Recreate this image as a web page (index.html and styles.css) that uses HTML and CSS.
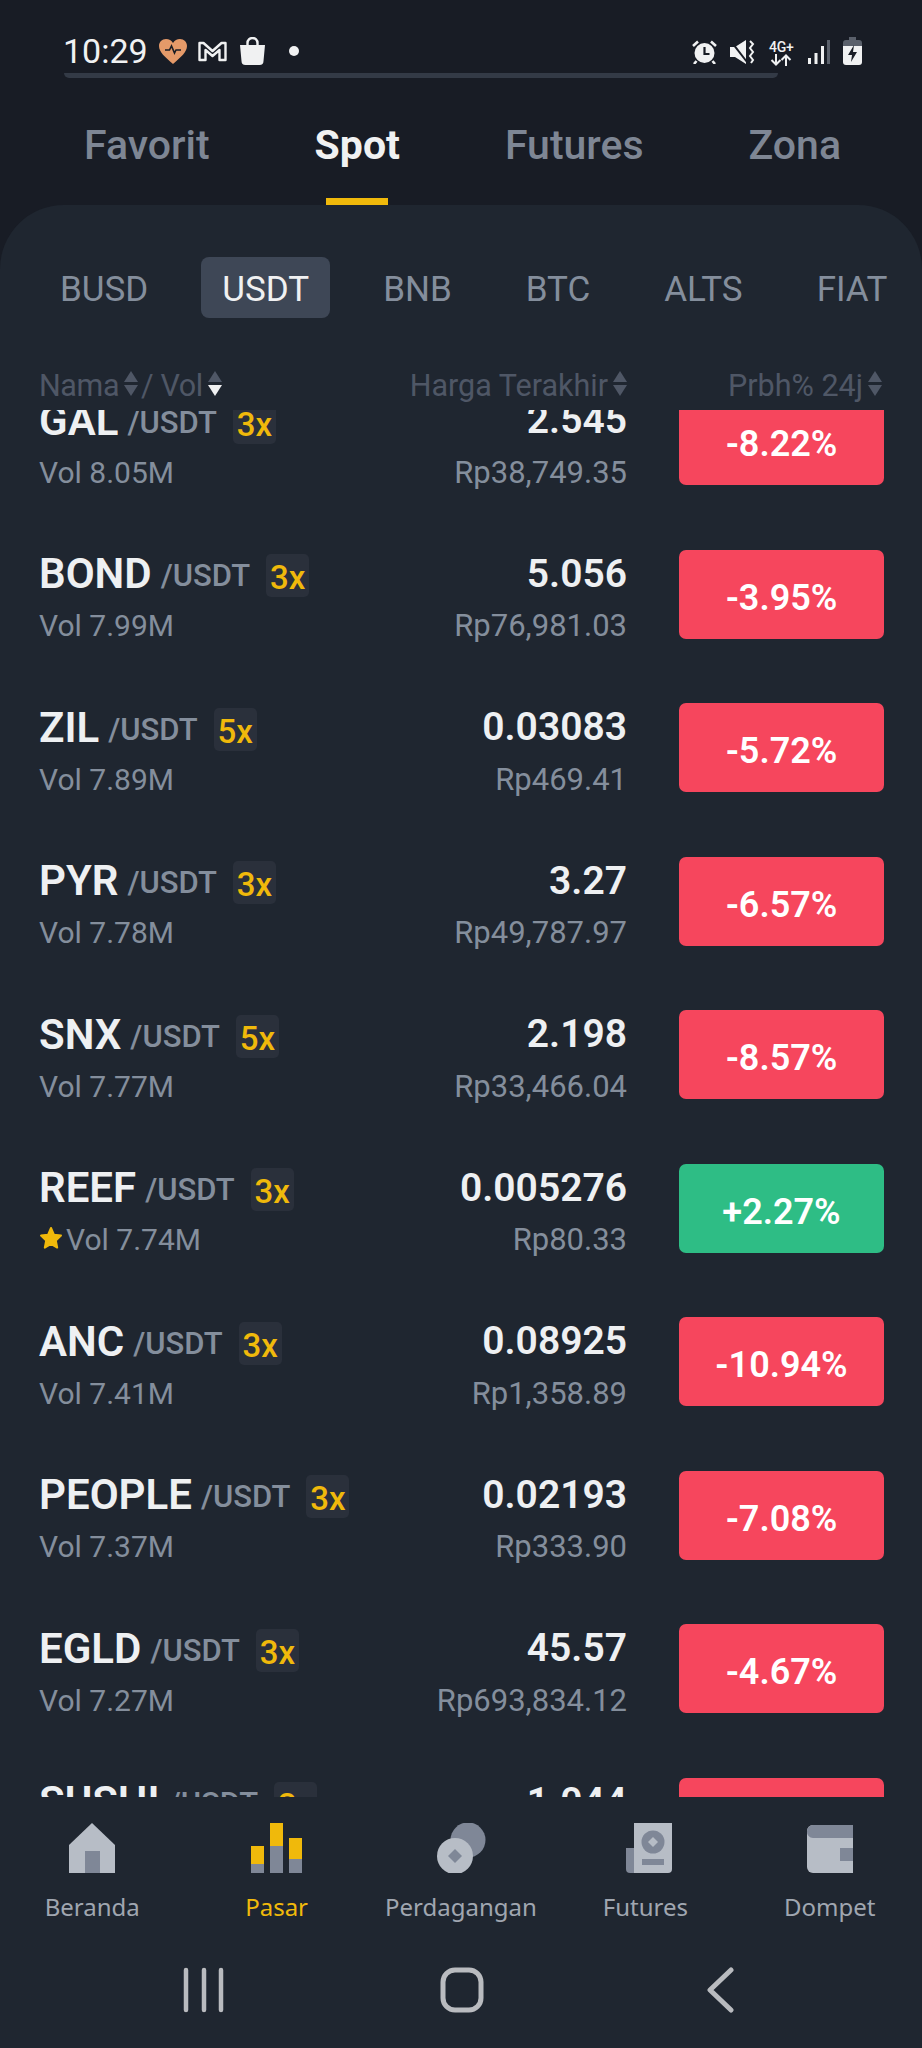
FILE: index.html
```html
<!DOCTYPE html>
<html lang="id">

<head>
    <meta charset="UTF-8">
    <meta name="viewport" content="width=device-width, initial-scale=1.0">
    <title>Pasar</title>
    <link rel="stylesheet" href="styles.css">
</head>

<body>
    <!-- Status bar -->
    <div class="status">
        <div class="statusLeft">
            <span class="time">10:29</span>
            <svg class="icoHeart" viewBox="0 0 28 25"><path fill="#e59a69" d="M14 25C6 18 0 13 0 7c0-4 3-7 7-7 3 0 5.500 1.500 7 4 1.500-2.500 4-4 7-4 4 0 7 3 7 7 0 6-6 11-14 18z"/><path fill="none" stroke="#1a1d24" stroke-width="1.600" d="M6 11h4.500l2-4 3 7 1.500-3h5"/></svg>
            <svg class="icoMail" viewBox="0 0 29 21"><path fill="none" stroke="#f0f1f2" stroke-width="2.400" stroke-linejoin="round" d="M1.500 2h4l9 8 9-8h4v17h-6V9l-7 6-7-6v10h-6z"/></svg>
            <svg class="icoBag" viewBox="0 0 25 28"><path fill="none" stroke="#f0f1f2" stroke-width="2.400" d="M7.500 10V6a5 5 0 0 1 10 0v4"/><path fill="#f0f1f2" d="M0 8h25l-1.500 16a4 4 0 0 1-4 4h-14a4 4 0 0 1-4-4z"/></svg>
            <span class="dot"></span>
        </div>
        <div class="statusRight">
            <svg class="icoAlarm" viewBox="0 0 25 24"><circle cx="12.500" cy="13" r="10" fill="#f0f1f2"/><path fill="none" stroke="#181c25" stroke-width="2.200" d="M12.500 7v7h5"/><path fill="none" stroke="#f0f1f2" stroke-width="2.600" d="M1 6l5-4.500M24 6l-5-4.500M4.500 21l-2.500 3M20.500 21l2.500 3"/></svg>
            <svg class="icoMute" viewBox="0 0 25 24"><path fill="#f0f1f2" d="M0 7h5l11-7v24L5 17H0z"/><path stroke="#181c25" stroke-width="2" d="M0 0l17 22"/><path fill="none" stroke="#f0f1f2" stroke-width="2" d="M20 1l3 3-3 4 3 4-3 4 3 4-2 3"/></svg>
            <div class="net">
                <span class="netText">4G+</span>
                <svg class="icoArrows" viewBox="0 0 24 12"><path fill="none" stroke="#f0f1f2" stroke-width="2" d="M7 0v10M2.500 6l4.500 4.500L11.500 6M17 12V2M12.500 6L17 1.500 21.500 6"/></svg>
            </div>
            <svg class="icoSignal" viewBox="0 0 22 24"><rect x="0" y="18" width="3" height="6" fill="#f0f1f2"/><rect x="6.500" y="13" width="3" height="11" fill="#f0f1f2"/><rect x="13" y="6" width="3" height="18" fill="#f0f1f2"/><rect x="19" y="0" width="3" height="24" fill="#5a606b"/></svg>
            <svg class="icoBattery" viewBox="0 0 19 28"><path fill="#5a606b" d="M6 0h7v3h3a3 3 0 0 1 3 3v3H0V6a3 3 0 0 1 3-3h3z"/><path fill="#f0f1f2" d="M0 9h19v16a3 3 0 0 1-3 3H3a3 3 0 0 1-3-3z"/><path fill="#181c25" d="M11 8l-6 10h4l-1 7 6-10h-4z"/></svg>
        </div>
    </div>
    <div class="statusLine"></div>

    <!-- Tab utama -->
    <div class="mainTabs">
        <span class="mainTab">Favorit</span>
        <span class="mainTab mainTabActive">Spot</span>
        <span class="mainTab">Futures</span>
        <span class="mainTab">Zona</span>
    </div>

    <div class="panel">
        <div class="subTabs">
            <span class="subTab">BUSD</span>
            <span class="subTab subTabActive">USDT</span>
            <span class="subTab">BNB</span>
            <span class="subTab">BTC</span>
            <span class="subTab">ALTS</span>
            <span class="subTab">FIAT</span>
        </div>

        <div class="listHead">
            <div class="headName">
                <span>Nama</span>
                <span class="sort"><i class="up"></i><i class="down"></i></span>
                <span class="headVol">/ Vol</span>
                <span class="sort"><i class="up"></i><i class="down downOn"></i></span>
            </div>
            <div class="headPrice">
                <span>Harga Terakhir</span>
                <span class="sort"><i class="up"></i><i class="down"></i></span>
            </div>
            <div class="headChange">
                <span>Prbh% 24j</span>
                <span class="sort"><i class="up"></i><i class="down"></i></span>
            </div>
        </div>

        <!-- Daftar pasar -->
        <div class="list">
            <div class="listInner">
                <div class="row">
                    <div class="coin">
                        <div class="pair"><b>GAL</b><span class="quote">/USDT</span><span class="lev">3x</span></div>
                        <div class="vol">Vol 8.05M</div>
                    </div>
                    <div class="price"><b>2.545</b><span>Rp38,749.35</span></div>
                    <div class="chg red">-8.22%</div>
                </div>
                <div class="row">
                    <div class="coin">
                        <div class="pair"><b>BOND</b><span class="quote">/USDT</span><span class="lev">3x</span></div>
                        <div class="vol">Vol 7.99M</div>
                    </div>
                    <div class="price"><b>5.056</b><span>Rp76,981.03</span></div>
                    <div class="chg red">-3.95%</div>
                </div>
                <div class="row">
                    <div class="coin">
                        <div class="pair"><b>ZIL</b><span class="quote">/USDT</span><span class="lev">5x</span></div>
                        <div class="vol">Vol 7.89M</div>
                    </div>
                    <div class="price"><b>0.03083</b><span>Rp469.41</span></div>
                    <div class="chg red">-5.72%</div>
                </div>
                <div class="row">
                    <div class="coin">
                        <div class="pair"><b>PYR</b><span class="quote">/USDT</span><span class="lev">3x</span></div>
                        <div class="vol">Vol 7.78M</div>
                    </div>
                    <div class="price"><b>3.27</b><span>Rp49,787.97</span></div>
                    <div class="chg red">-6.57%</div>
                </div>
                <div class="row">
                    <div class="coin">
                        <div class="pair"><b>SNX</b><span class="quote">/USDT</span><span class="lev">5x</span></div>
                        <div class="vol">Vol 7.77M</div>
                    </div>
                    <div class="price"><b>2.198</b><span>Rp33,466.04</span></div>
                    <div class="chg red">-8.57%</div>
                </div>
                <div class="row">
                    <div class="coin">
                        <div class="pair"><b>REEF</b><span class="quote">/USDT</span><span class="lev">3x</span></div>
                        <div class="vol"><svg class="star" viewBox="0 0 24 24"><path fill="#f0b90b" stroke="#f0b90b" stroke-width="2" stroke-linejoin="round" d="M12 2l3 6.800 7 .8-5.200 4.800 1.400 7.200L12 18l-6.200 3.600 1.400-7.200L2 9.600l7-.8z"/></svg>Vol 7.74M</div>
                    </div>
                    <div class="price"><b>0.005276</b><span>Rp80.33</span></div>
                    <div class="chg green">+2.27%</div>
                </div>
                <div class="row">
                    <div class="coin">
                        <div class="pair"><b>ANC</b><span class="quote">/USDT</span><span class="lev">3x</span></div>
                        <div class="vol">Vol 7.41M</div>
                    </div>
                    <div class="price"><b>0.08925</b><span>Rp1,358.89</span></div>
                    <div class="chg red">-10.94%</div>
                </div>
                <div class="row">
                    <div class="coin">
                        <div class="pair"><b>PEOPLE</b><span class="quote">/USDT</span><span class="lev">3x</span></div>
                        <div class="vol">Vol 7.37M</div>
                    </div>
                    <div class="price"><b>0.02193</b><span>Rp333.90</span></div>
                    <div class="chg red">-7.08%</div>
                </div>
                <div class="row">
                    <div class="coin">
                        <div class="pair"><b>EGLD</b><span class="quote">/USDT</span><span class="lev">3x</span></div>
                        <div class="vol">Vol 7.27M</div>
                    </div>
                    <div class="price"><b>45.57</b><span>Rp693,834.12</span></div>
                    <div class="chg red">-4.67%</div>
                </div>
                <div class="row">
                    <div class="coin">
                        <div class="pair"><b>SUSHI</b><span class="quote">/USDT</span><span class="lev">3x</span></div>
                        <div class="vol">Vol 7.19M</div>
                    </div>
                    <div class="price"><b>1.044</b><span>Rp15,896.40</span></div>
                    <div class="chg red">-6.12%</div>
                </div>
            </div>
        </div>

        <!-- Navigasi bawah -->
        <div class="bottomNav">
            <div class="navItem">
                <svg class="navIcon" viewBox="0 0 60 50"><path fill="#b7bdc6" d="M30 0l23 22v28H7V22z"/><rect x="23" y="28" width="15" height="22" fill="#7f8797"/></svg>
                <span>Beranda</span>
            </div>
            <div class="navItem navActive">
                <svg class="navIcon" viewBox="0 0 60 50"><rect x="4" y="23" width="13" height="18" fill="#f0b90b"/><rect x="4" y="41" width="13" height="9" fill="#7f8797"/><rect x="23" y="0" width="13" height="23" fill="#f0b90b"/><rect x="23" y="23" width="13" height="27" fill="#7f8797"/><rect x="42" y="15" width="13" height="21" fill="#f0b90b"/><rect x="42" y="36" width="13" height="14" fill="#7f8797"/></svg>
                <span>Pasar</span>
            </div>
            <div class="navItem">
                <svg class="navIcon" viewBox="0 0 60 50"><circle cx="37" cy="17" r="17.500" fill="#7f8797"/><circle cx="24" cy="33" r="18" fill="#b7bdc6"/><path fill="#7f8797" d="M24 26l7 7-7 7-7-7z"/></svg>
                <span>Perdagangan</span>
            </div>
            <div class="navItem">
                <svg class="navIcon" viewBox="0 0 60 50"><path fill="#7f8797" d="M11 25h12v25h-8a4 4 0 0 1-4-4z"/><path fill="#b7bdc6" d="M19 0h38v46a4 4 0 0 1-4 4H19z"/><circle cx="38" cy="19" r="11.500" fill="#7f8797"/><path fill="#b7bdc6" d="M38 14l5 5-5 5-5-5z"/><rect x="27" y="36" width="22" height="6" fill="#7f8797"/></svg>
                <span>Futures</span>
            </div>
            <div class="navItem">
                <svg class="navIcon" viewBox="0 0 60 50"><path fill="#b7bdc6" d="M7 8a6 6 0 0 1 6-6h40v48H13a6 6 0 0 1-6-6z"/><path fill="#7f8797" d="M13 2h40v13H13a6 6 0 0 1-6-6.500A6 6 0 0 1 13 2z"/><rect x="40" y="25" width="13" height="13" fill="#7f8797"/></svg>
                <span>Dompet</span>
            </div>
        </div>

        <!-- Tombol sistem -->
        <div class="sysNav">
            <svg class="sysIcon" viewBox="0 0 44 46"><path fill="none" stroke="#b9bbbf" stroke-width="4.500" stroke-linecap="round" d="M4 3v40M22 3v40M39 3v40"/></svg>
            <svg class="sysIcon" viewBox="0 0 44 46"><rect x="3" y="3" width="38" height="40" rx="12" fill="none" stroke="#b9bbbf" stroke-width="5"/></svg>
            <svg class="sysIcon" viewBox="0 0 44 46"><path fill="none" stroke="#b9bbbf" stroke-width="5" stroke-linecap="round" stroke-linejoin="round" d="M33 3L12 23l21 20"/></svg>
        </div>
    </div>
</body>

</html>
```

FILE: styles.css
```css
html,
body {
    margin: 0;
    padding: 0;
}

body {
    width: 922px;
    height: 2048px;
    overflow: hidden;
    background-color: #181c25;
    font-family: "Roboto", "Liberation Sans", sans-serif;
    color: #f0f1f2;
}

/* Status bar */
.status {
    height: 73px;
    padding: 0 60px 0 63px;
    box-sizing: border-box;
    display: flex;
    justify-content: space-between;
}

.statusLeft {
    display: flex;
    align-items: center;
    padding-top: 29px;
    height: 44px;
}

.time {
    font-size: 34px;
    line-height: 44px;
    width: 96px;
}

.icoHeart {
    width: 28px;
    height: 25px;
    margin-right: 11px;
}

.icoMail {
    width: 29px;
    height: 21px;
    margin-right: 13px;
}

.icoBag {
    width: 25px;
    height: 28px;
    margin-right: 24px;
}

.dot {
    width: 10px;
    height: 10px;
    border-radius: 50%;
    background-color: #f0f1f2;
}

.statusRight {
    display: flex;
    align-items: flex-start;
    padding-top: 40px;
}

.icoAlarm {
    width: 25px;
    height: 24px;
    margin-right: 13px;
}

.icoMute {
    width: 25px;
    height: 24px;
    margin-right: 14px;
}

.net {
    width: 28px;
    margin-right: 11px;
    margin-top: 1px;
}

.netText {
    display: block;
    font-size: 14px;
    line-height: 13px;
    font-weight: 500;
    letter-spacing: -0.2px;
}

.icoArrows {
    display: block;
    width: 24px;
    height: 12px;
}

.icoSignal {
    width: 22px;
    height: 24px;
    margin-right: 13px;
}

.icoBattery {
    width: 19px;
    height: 28px;
    margin-top: -3px;
}

.statusLine {
    height: 5px;
    margin: 0 144px 0 64px;
    background-color: #333a46;
    border-radius: 0 0 6px 6px;
}

/* Tab utama */
.mainTabs {
    height: 127px;
    display: flex;
    padding-left: 84px;
    box-sizing: border-box;
}

.mainTab {
    font-size: 41px;
    font-weight: 500;
    color: #7e8694;
    line-height: 47px;
    padding-top: 44px;
    margin-right: 105px;
    position: relative;
}

.mainTabActive {
    color: #f0f1f2;
    font-weight: 700;
}

.mainTabActive::after {
    content: "";
    position: absolute;
    left: 11px;
    bottom: 0;
    width: 62px;
    height: 7px;
    background-color: #f0b90b;
}

/* Painel */
.panel {
    height: 1843px;
    background-color: #1f2630;
    border-radius: 64px 64px 0 0;
    overflow: hidden;
}

.subTabs {
    display: flex;
    padding: 52px 0 0 39px;
    height: 61px;
}

.subTab {
    font-size: 35px;
    line-height: 66px;
    height: 61px;
    color: #848e9c;
    padding: 0 21px;
    margin-right: 32px;
    border-radius: 8px;
    white-space: nowrap;
}

.subTabActive {
    background-color: #3e4756;
    color: #f0f1f2;
}

.listHead {
    display: flex;
    height: 92px;
    align-items: flex-end;
    padding: 0 40px 6px 39px;
    font-size: 30.5px;
    line-height: 36px;
    color: #4f5766;
    box-sizing: border-box;
}

.headName {
    display: flex;
    align-items: center;
    width: 369px;
    letter-spacing: -0.4px;
}

.headVol {
    margin-left: 3px;
}

.headPrice {
    display: flex;
    align-items: center;
    justify-content: flex-end;
    width: 219px;
}

.headChange {
    display: flex;
    align-items: center;
    justify-content: flex-end;
    width: 255px;
}

.sort {
    display: inline-flex;
    flex-direction: column;
    gap: 3px;
    margin-left: 5px;
    margin-bottom: 6px;
}

.up,
.down {
    display: block;
    width: 0;
    height: 0;
    border-left: 7px solid transparent;
    border-right: 7px solid transparent;
}

.up {
    border-bottom: 11px solid #4f5766;
}

.down {
    border-top: 11px solid #4f5766;
}

.downOn {
    border-top-color: #f0f1f2;
}

/* Daftar */
.list {
    height: 1387px;
    overflow: hidden;
}

.listInner {
    margin-top: -46px;
}

.row {
    height: 153.5px;
    display: flex;
    align-items: center;
    padding: 0 38px 0 39px;
    box-sizing: border-box;
}

.coin {
    flex: 1;
    padding-top: 6.5px;
}

.pair {
    display: flex;
    align-items: center;
    height: 46px;
}

.pair b {
    font-size: 42px;
    font-weight: 600;
    color: #eef0f2;
}

.quote {
    font-size: 31px;
    font-weight: 500;
    color: #848e9c;
    margin-left: 9px;
    margin-top: 4px;
}

.lev {
    margin-left: 16px;
    margin-top: 4px;
    width: 43px;
    height: 43px;
    line-height: 47px;
    text-align: center;
    background-color: #2a303b;
    border-radius: 5px;
    color: #f0b90b;
    font-size: 33px;
    font-weight: 500;
}

.vol {
    display: flex;
    align-items: center;
    font-size: 30px;
    line-height: 36px;
    margin-top: 11.5px;
    color: #848e9c;
}

.star {
    width: 24px;
    height: 24px;
    margin-right: 3px;
    margin-top: -4px;
}

.price {
    text-align: right;
    margin-right: 52px;
    padding-top: 6.5px;
}

.price b {
    display: block;
    height: 46px;
    line-height: 46px;
    font-size: 39px;
    font-weight: 600;
    color: #eef0f2;
}

.price span {
    display: block;
    font-size: 31px;
    line-height: 36px;
    margin-top: 11.5px;
    color: #848e9c;
}

.chg {
    width: 205px;
    height: 89px;
    border-radius: 7px;
    text-align: center;
    font-size: 36px;
    font-weight: 600;
    line-height: 96px;
    color: #fff;
}

.red {
    background-color: #f6465d;
}

.green {
    background-color: #2ebd85;
}

/* Navigasi bawah */
.bottomNav {
    display: flex;
    padding: 26px 0 0 0;
}

.navItem {
    width: 184.4px;
    display: flex;
    flex-direction: column;
    align-items: center;
    font-family: "Noto Sans", sans-serif;
    font-size: 24px;
    line-height: 34px;
    color: #a0a6b0;
}

.navIcon {
    width: 60px;
    height: 50px;
    margin-bottom: 17px;
}

.navActive {
    color: #f0b90b;
}

.sysNav {
    display: grid;
    grid-template-columns: repeat(3, 258px);
    justify-items: center;
    padding: 43px 0 0 75px;
}

.sysIcon {
    width: 44px;
    height: 46px;
}
```
